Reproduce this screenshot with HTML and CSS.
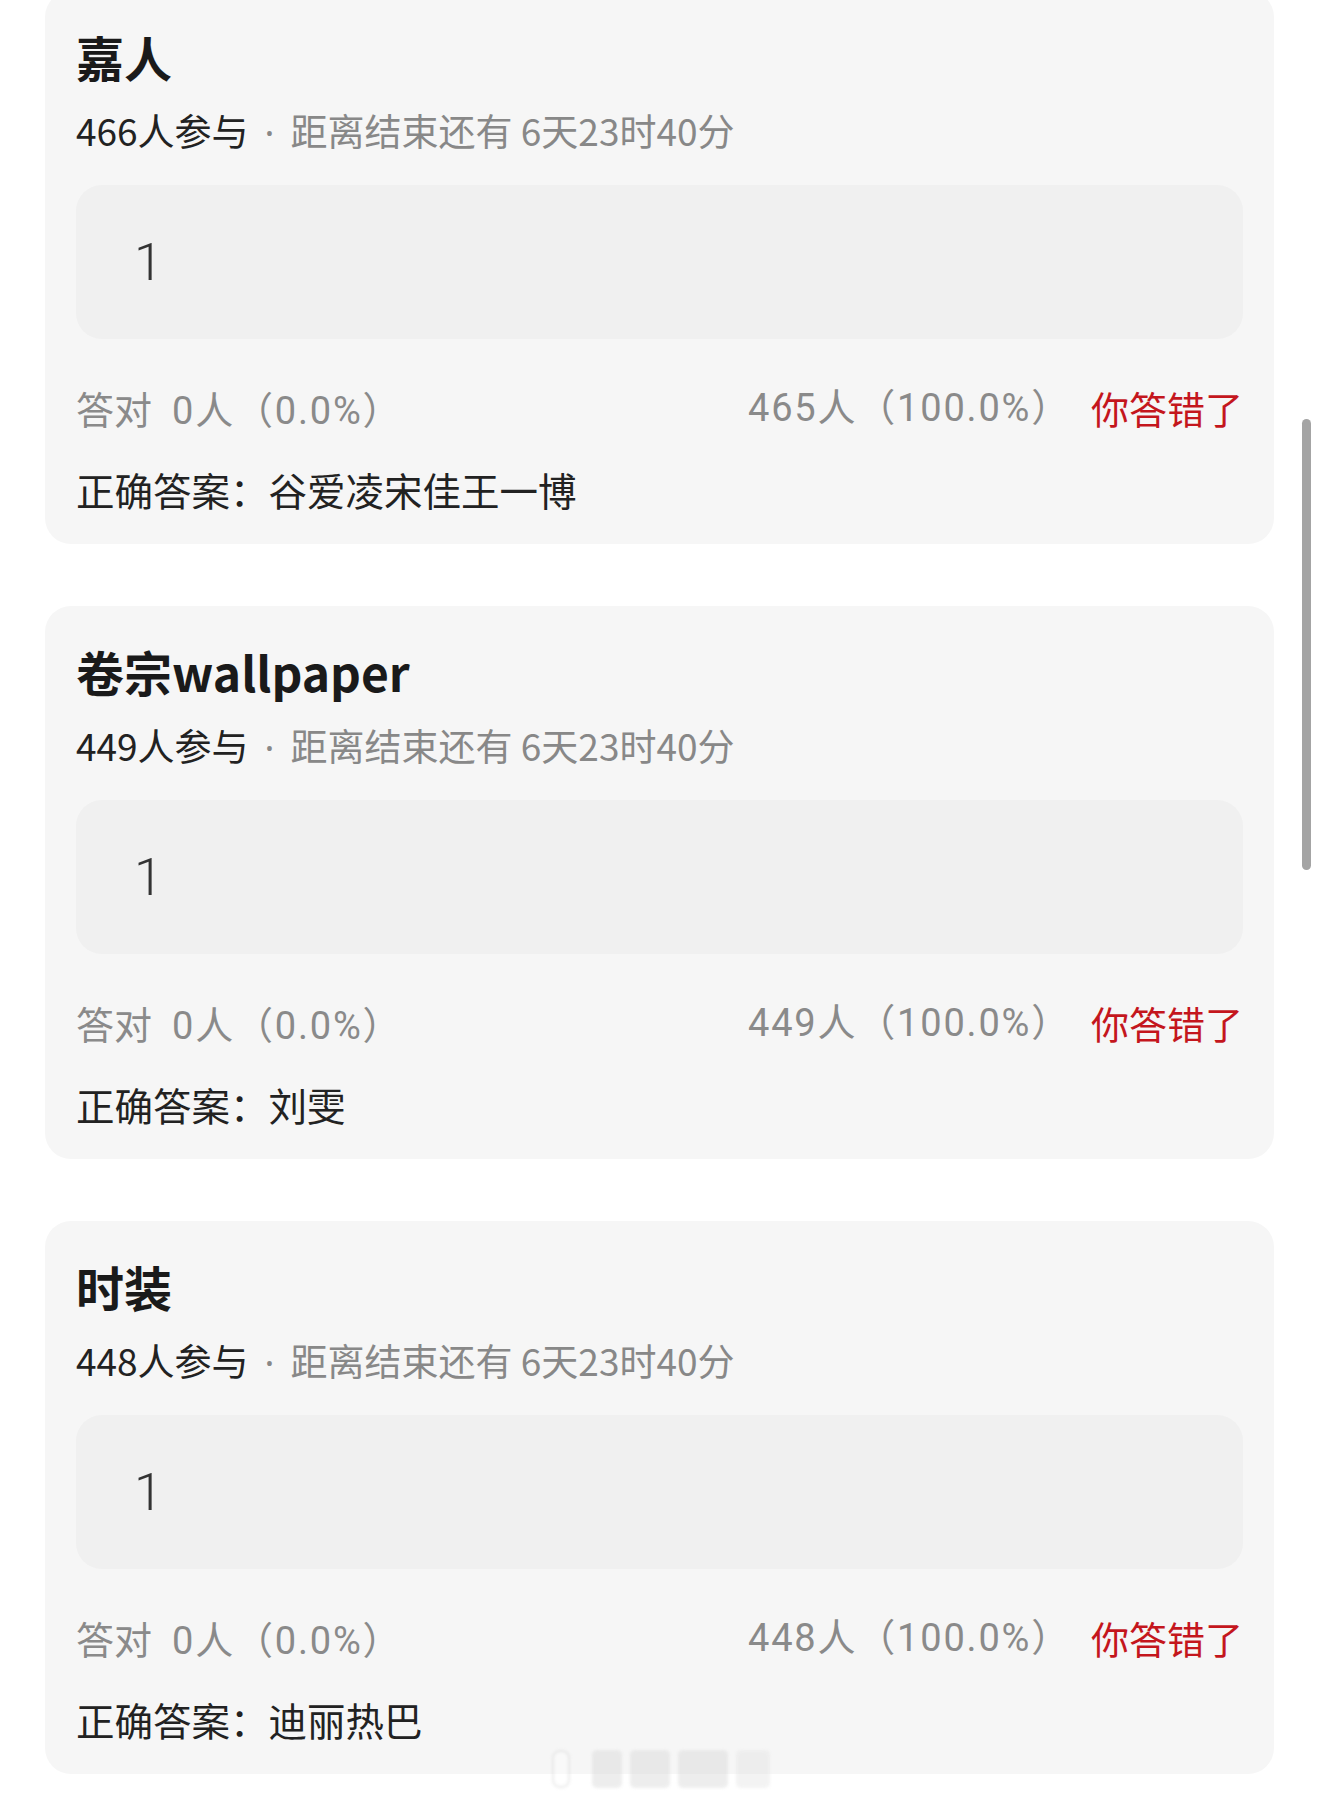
FILE: index.html
```html
<!DOCTYPE html>
<html lang="zh">
<head>
<meta charset="utf-8">
<title>答题结果</title>
<link rel="stylesheet" href="styles.css">
</head>
<body>
<div class="page">
  <div class="list">
    <section class="card">
      <h2 class="title">嘉人</h2>
      <div class="meta"><span class="count">466人参与</span><span class="dot">·</span>距离结束还有 6天23时40分</div>
      <div class="answer-box">1</div>
      <div class="stats">
        <div class="right-stat"><span class="label">答对</span><span class="num">0人（0.0%）</span></div>
        <div class="wrong-side"><span class="num">465人（100.0%）</span><span class="verdict">你答错了</span></div>
      </div>
      <div class="correct">正确答案：谷爱凌宋佳王一博</div>
    </section>
    <section class="card">
      <h2 class="title">卷宗wallpaper</h2>
      <div class="meta"><span class="count">449人参与</span><span class="dot">·</span>距离结束还有 6天23时40分</div>
      <div class="answer-box">1</div>
      <div class="stats">
        <div class="right-stat"><span class="label">答对</span><span class="num">0人（0.0%）</span></div>
        <div class="wrong-side"><span class="num">449人（100.0%）</span><span class="verdict">你答错了</span></div>
      </div>
      <div class="correct">正确答案：刘雯</div>
    </section>
    <section class="card">
      <h2 class="title">时装</h2>
      <div class="meta"><span class="count">448人参与</span><span class="dot">·</span>距离结束还有 6天23时40分</div>
      <div class="answer-box">1</div>
      <div class="stats">
        <div class="right-stat"><span class="label">答对</span><span class="num">0人（0.0%）</span></div>
        <div class="wrong-side"><span class="num">448人（100.0%）</span><span class="verdict">你答错了</span></div>
      </div>
      <div class="correct">正确答案：迪丽热巴</div>
    </section>
  </div>
  <div class="scrollbar"></div>
  <div class="watermark"><span class="wm-bar wm-a"></span><span class="wm-bar wm-b"></span><span class="wm-bar wm-c"></span><span class="wm-bar wm-d"></span><span class="wm-bar wm-e"></span></div>
</div>
</body>
</html>
```
FILE: styles.css
```css
html, body {
  margin: 0;
  padding: 0;
  background: #ffffff;
}
body {
  font-family: "Noto Sans CJK SC", "Noto Sans", sans-serif;
  color: #222;
}
.page {
  position: relative;
  width: 1320px;
  height: 1804px;
  overflow: hidden;
}
.list {
  display: flex;
  flex-direction: column;
  gap: 62px;
  margin-top: -9px;
  padding: 0 46px 0 45px;
}
.card {
  background: #f6f6f6;
  border-radius: 26px;
  height: 553px;
  box-sizing: border-box;
  padding: 35px 31px 30px 31px;
}
.title {
  margin: 0;
  font-size: 48px;
  line-height: 60px;
  font-weight: 700;
  color: #1a1a1a;
}
.meta {
  margin-top: 19px;
  font-size: 37px;
  line-height: 50px;
  color: #888;
  white-space: nowrap;
}
.count {
  color: #222;
}
.dot {
  font-family: "Noto Sans", sans-serif;
  padding: 0 16px;
}
.answer-box {
  margin-top: 28px;
  height: 154px;
  background: #f0f0f0;
  border-radius: 26px;
  display: flex;
  align-items: center;
  padding-left: 58px;
  font-size: 52px;
  color: #333;
  font-family: "Roboto", "Noto Sans CJK SC", sans-serif;
  font-weight: 300;
}
.stats {
  margin-top: 44px;
  display: flex;
  justify-content: space-between;
  font-size: 38px;
  line-height: 50px;
  color: #8a8a8a;
  white-space: nowrap;
  font-family: "Roboto", "Noto Sans CJK SC", sans-serif;
}
.label {
  font-family: "Noto Sans CJK SC", sans-serif;
  margin-right: 20px;
}
.num {
  letter-spacing: 1.8px;
}
.wrong-side {
  display: flex;
  gap: 20px;
}
.verdict {
  color: #c4161d;
  font-family: "Noto Sans CJK SC", sans-serif;
}
.correct {
  margin-top: 28px;
  font-size: 38.5px;
  line-height: 50px;
  color: #222;
}
.scrollbar {
  position: absolute;
  left: 1302px;
  top: 419px;
  width: 9px;
  height: 451px;
  border-radius: 5px;
  background: #a4a4a4;
}
.watermark {
  position: absolute;
  left: 552px;
  top: 1750px;
  height: 38px;
  display: flex;
  gap: 8px;
  align-items: stretch;
  opacity: 0.4;
  filter: blur(1.5px);
}
.wm-bar {
  display: block;
  background: #d4d4d4;
  border-radius: 5px;
}
.wm-a { width: 14px; margin-right: 14px; border: 2px solid #cfcfcf; background: #fff; border-radius: 8px; }
.wm-b { width: 30px; }
.wm-c { width: 40px; }
.wm-d { width: 50px; }
.wm-e { width: 34px; background: #e2e2e2; }
```
